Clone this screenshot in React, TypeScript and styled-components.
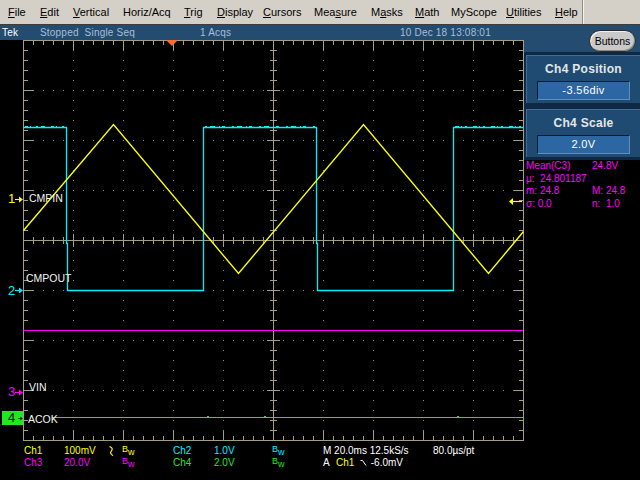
import React from "react";
import styled, { createGlobalStyle } from "styled-components";

const Global = createGlobalStyle`
  html, body { margin: 0; padding: 0; background: #000; }
  body { width: 640px; height: 480px; overflow: hidden; font-family: "Liberation Sans", Arial, sans-serif; }
`;

const Screen = styled.div`
  width: 640px;
  height: 480px;
  display: flex;
  flex-direction: column;
  background: #000;
  overflow: hidden;
`;

const MenuBar = styled.div`
  height: 24px;
  flex: none;
  display: flex;
  align-items: center;
  padding-left: 8px;
  background: #d4d0c8;
  border-bottom: 1px solid #3c3c3c;
  font-size: 11px;
  color: #000;
`;

const MenuItem = styled.div<{ $w: number }>`
  width: ${(p) => p.$w}px;
  flex: none;
  white-space: nowrap;
`;

const Acc = styled.span`
  text-decoration: underline;
  text-underline-offset: 1px;
`;

const MenuSep = styled.div`
  align-self: stretch;
  width: 1px;
  background: #8f8b84;
  border-right: 1px solid #f4f2ee;
`;

const Body = styled.div`
  flex: 1;
  display: flex;
  min-height: 0;
`;

const Main = styled.div`
  width: 524px;
  flex: none;
  display: flex;
  flex-direction: column;
`;

const StatusBar = styled.div`
  height: 15px;
  flex: none;
  display: flex;
  align-items: center;
  background: #244c70;
  font-size: 10px;
  color: #a9bfd6;
  white-space: nowrap;
`;

const StatusText = styled.span<{ $w: number; $bright?: boolean }>`
  width: ${(p) => p.$w}px;
  flex: none;
  color: ${(p) => (p.$bright ? "#ffffff" : "#a9bfd6")};
  letter-spacing: 0.2px;
`;

const ScopeArea = styled.div`
  position: relative;
  height: 401px;
  flex: none;
`;

const ScopeSvg = styled.svg`
  display: block;
`;

const MarkerNum = styled.span<{ $top: number; $color: string }>`
  position: absolute;
  left: 8px;
  top: ${(p) => p.$top}px;
  font-size: 13px;
  line-height: 14px;
  color: ${(p) => p.$color};
`;

const MarkerBox = styled.div<{ $top: number }>`
  position: absolute;
  left: 2px;
  top: ${(p) => p.$top}px;
  width: 21px;
  height: 14px;
  background: #1ee81e;
  display: flex;
  align-items: center;
  padding-left: 6px;
  box-sizing: border-box;
  gap: 3px;
  font-size: 13px;
  line-height: 14px;
  color: #000;
`;

const TraceLabel = styled.span<{ $top: number; $left: number }>`
  position: absolute;
  left: ${(p) => p.$left}px;
  top: ${(p) => p.$top}px;
  font-size: 10.5px;
  line-height: 12px;
  color: #f4f4f4;
`;

const Readout = styled.div`
  flex: 1;
  display: grid;
  grid-template-columns: 40px 44px 14px 51px 41px 58px 51px 110px auto;
  grid-auto-rows: 12px;
  align-content: start;
  padding: 4px 0 0 24px;
  font-size: 10px;
  line-height: 12px;
  white-space: nowrap;
`;

const Cell = styled.span<{ $c: string; $span?: number }>`
  color: ${(p) => p.$c};
  display: flex;
  align-items: center;
  ${(p) => (p.$span ? `grid-column: span ${p.$span};` : "")}
`;

const Inline = styled.span<{ $w?: number; $c: string }>`
  display: inline-block;
  ${(p) => (p.$w ? `width: ${p.$w}px;` : "")}
  color: ${(p) => p.$c};
`;

const BwMark = styled.span<{ $c: string }>`
  display: inline-flex;
  align-items: flex-start;
  height: 12px;
  color: ${(p) => p.$c};
  font-size: 9px;
  line-height: 9px;
`;

const BwB = styled.span`
  margin-top: 0px;
`;

const BwW = styled.span`
  margin-top: 3px;
`;

const Side = styled.div`
  flex: 1;
  display: flex;
  flex-direction: column;
`;

const SideHeader = styled.div`
  height: 27px;
  flex: none;
  background: #244c70;
  display: flex;
  justify-content: flex-end;
  align-items: flex-start;
  padding: 5px 4px 0 0;
  box-sizing: border-box;
`;

const PillButton = styled.div`
  width: 47px;
  height: 22px;
  box-sizing: border-box;
  border: 1px solid #2a2a2a;
  border-radius: 11px;
  background: #c9c9c9;
  box-shadow: inset 1px 1px 0 #f2f2f2, inset -1px -1px 0 #8a8a8a;
  color: #000;
  font-size: 10.5px;
  line-height: 20px;
  text-align: center;
`;

const PanelStack = styled.div`
  flex: none;
  display: flex;
  flex-direction: column;
  gap: 6px;
  padding: 3px 0 3px 2px;
  background: #0f2843;
`;

const Panel = styled.div`
  height: 48px;
  box-sizing: border-box;
  background: #1f4b72;
  border-top: 1px solid #3f6d95;
  border-left: 1px solid #3f6d95;
  display: flex;
  flex-direction: column;
  align-items: center;
`;

const PanelTitle = styled.div`
  margin-top: 6px;
  height: 14px;
  font-size: 12px;
  line-height: 14px;
  font-weight: bold;
  color: #e6e6e6;
  letter-spacing: 0.3px;
`;

const ValueBox = styled.div`
  margin-top: 5px;
  width: 93px;
  height: 19px;
  box-sizing: border-box;
  background: #2c67a4;
  border-top: 1px solid #0a1c30;
  border-left: 1px solid #0a1c30;
  border-bottom: 1px solid #5f8fbf;
  border-right: 1px solid #5f8fbf;
  color: #fff;
  font-size: 11px;
  line-height: 17px;
  text-align: center;
  letter-spacing: 0.4px;
`;

const Measurements = styled.div`
  display: grid;
  grid-template-columns: 66px auto;
  padding-left: 2px;
  font-size: 10px;
  line-height: 12.7px;
  color: #ff00ff;
  white-space: nowrap;
`;

const MeasWide = styled.span`
  grid-column: span 2;
`;

const GRAT = "#a39e84";
const DOT = "#8a8a8a";
const YEL = "#ffff00";
const CYA = "#00f0ff";
const MAG = "#ff00ff";
const GRN = "#22e622";

const divX = [73.5, 123.5, 173.5, 223.5, 323.5, 373.5, 423.5, 473.5];
const divY = [50.5, 100.5, 150.5, 250.5, 300.5, 350.5];

const ch1 = [
  [23, 190], [113, 84], [238, 233], [363, 84], [488, 233], [523, 191],
];
const ch2 = [
  [23, 87], [66, 87], [66, 203], [67, 203], [67, 250], [203, 250], [203, 87],
  [316, 87], [316, 203], [317, 203], [317, 250], [453, 250], [453, 87], [523, 87],
];
const pts = (a: number[][]) => a.map(([x, y]) => `${x + 0.5},${y + 0.5}`).join(" ");

const RightArrow = ({ y, color }: { y: number; color: string }) => (
  <g>
    <line x1={15} y1={y + 0.5} x2={21} y2={y + 0.5} stroke={color} strokeWidth={1} />
    <polygon points={`${19},${y - 2.5} ${23},${y + 0.5} ${19},${y + 3.5}`} fill={color} />
  </g>
);

function Graticule() {
  return (
    <ScopeSvg width={524} height={401} viewBox="0 0 524 401">
      <g stroke={DOT} strokeDasharray="1 9" shapeRendering="crispEdges">
        {divX.map((x) => (
          <line key={`vx${x}`} x1={x} y1={0} x2={x} y2={401} />
        ))}
        {divY.map((y) => (
          <line key={`hy${y}`} x1={23} y1={y} x2={524} y2={y} />
        ))}
      </g>
      <g stroke={GRAT} fill="none" shapeRendering="crispEdges">
        <rect x={23.5} y={0.5} width={500} height={400} />
        <line x1={23} y1={200.5} x2={524} y2={200.5} />
        <line x1={273.5} y1={0} x2={273.5} y2={401} />
        <line x1={23} y1={200.5} x2={524} y2={200.5} strokeWidth={7} strokeDasharray="1 9" />
        <line x1={23} y1={200.5} x2={524} y2={200.5} strokeWidth={13} strokeDasharray="1 49" />
        <line x1={273.5} y1={0} x2={273.5} y2={401} strokeWidth={7} strokeDasharray="1 9" />
        <line x1={273.5} y1={0} x2={273.5} y2={401} strokeWidth={13} strokeDasharray="1 49" />
        <line x1={23} y1={2.5} x2={524} y2={2.5} strokeWidth={5} strokeDasharray="1 9" />
        <line x1={23} y1={5} x2={524} y2={5} strokeWidth={10} strokeDasharray="1 49" />
        <line x1={23} y1={398.5} x2={524} y2={398.5} strokeWidth={5} strokeDasharray="1 9" />
        <line x1={23} y1={396} x2={524} y2={396} strokeWidth={10} strokeDasharray="1 49" />
        <line x1={25.5} y1={0} x2={25.5} y2={401} strokeWidth={5} strokeDasharray="1 9" />
        <line x1={28} y1={0} x2={28} y2={401} strokeWidth={10} strokeDasharray="1 49" />
        <line x1={521.5} y1={0} x2={521.5} y2={401} strokeWidth={5} strokeDasharray="1 9" />
        <line x1={519} y1={0} x2={519} y2={401} strokeWidth={10} strokeDasharray="1 49" />
      </g>
      <line x1={23} y1={290.5} x2={523} y2={290.5} stroke={MAG} strokeWidth={1.2} />
      <line x1={52} y1={377.5} x2={523} y2={377.5} stroke={GRN} strokeWidth={1.2} />
      <g fill={GRN}>
        <rect x={207} y={376} width={2} height={1} />
        <rect x={264} y={376} width={2} height={1} />
        <rect x={457} y={376} width={2} height={1} />
      </g>
      <polyline points={pts(ch2)} fill="none" stroke={CYA} strokeWidth={1.3} strokeLinejoin="miter" />
      <g stroke={CYA} strokeWidth={1} shapeRendering="crispEdges">
        <line x1={25} y1={86.5} x2={66} y2={86.5} strokeDasharray="3 2 1 5 2 3 4 6" />
        <line x1={205} y1={86.5} x2={316} y2={86.5} strokeDasharray="2 3 5 4 1 2 3 7" />
        <line x1={455} y1={86.5} x2={523} y2={86.5} strokeDasharray="4 2 1 3 2 6" />
      </g>
      <polyline points={pts(ch1)} fill="none" stroke={YEL} strokeWidth={1.4} strokeLinejoin="miter" />
      <polygon points="166,0 178,0 172,6" fill="#ff6f2a" />
      <RightArrow y={159} color={YEL} />
      <RightArrow y={250} color={CYA} />
      <RightArrow y={352} color={MAG} />
      <g>
        <line x1={512} y1={161.5} x2={522} y2={161.5} stroke={YEL} strokeWidth={1.2} />
        <polygon points="509,161.5 513,158 513,165" fill={YEL} />
      </g>
    </ScopeSvg>
  );
}

const SlopeIcon = () => (
  <svg width={8} height={8} viewBox="0 0 8 8">
    <path d="M0.5 1.5 H2.5 L6 6.5" fill="none" stroke="#ffffff" strokeWidth={1} />
  </svg>
);

const CouplingIcon = () => (
  <svg width={7} height={10} viewBox="0 0 7 10">
    <path d="M1.5 0.5 Q5.5 2 3.5 4.8 Q1.2 7.5 5 9.5" fill="none" stroke={YEL} strokeWidth={1.2} />
  </svg>
);

const Bw = ({ c }: { c: string }) => (
  <BwMark $c={c}>
    <BwB>B</BwB>
    <BwW>w</BwW>
  </BwMark>
);

export default function App() {
  return (
    <>
      <Global />
      <Screen>
        <MenuBar>
          <MenuItem $w={32}><Acc>F</Acc>ile</MenuItem>
          <MenuItem $w={33}><Acc>E</Acc>dit</MenuItem>
          <MenuItem $w={50}><Acc>V</Acc>ertical</MenuItem>
          <MenuItem $w={61}>Horiz/Acq</MenuItem>
          <MenuItem $w={33}><Acc>T</Acc>rig</MenuItem>
          <MenuItem $w={46}><Acc>D</Acc>isplay</MenuItem>
          <MenuItem $w={51}><Acc>C</Acc>ursors</MenuItem>
          <MenuItem $w={57}>Mea<Acc>s</Acc>ure</MenuItem>
          <MenuItem $w={44}>M<Acc>a</Acc>sks</MenuItem>
          <MenuItem $w={36}><Acc>M</Acc>ath</MenuItem>
          <MenuItem $w={55}>MyScope</MenuItem>
          <MenuItem $w={49}><Acc>U</Acc>tilities</MenuItem>
          <MenuItem $w={27}><Acc>H</Acc>elp</MenuItem>
          <MenuSep />
        </MenuBar>
        <Body>
          <Main>
            <StatusBar>
              <StatusText $w={2} />
              <StatusText $w={38} $bright>Tek</StatusText>
              <StatusText $w={160}>Stopped&nbsp; Single Seq</StatusText>
              <StatusText $w={200}>1 Acqs</StatusText>
              <StatusText $w={110}>10 Dec 18 13:08:01</StatusText>
            </StatusBar>
            <ScopeArea>
              <Graticule />
              <MarkerNum $top={152} $color={YEL}>1</MarkerNum>
              <MarkerNum $top={244} $color={CYA}>2</MarkerNum>
              <MarkerNum $top={345} $color={MAG}>3</MarkerNum>
              <MarkerBox $top={371}>
                <span>4</span>
                <svg width={8} height={7} viewBox="0 0 8 7">
                  <line x1={0} y1={3.5} x2={5} y2={3.5} stroke="#000" strokeWidth={1} />
                  <polygon points="4,0.5 8,3.5 4,6.5" fill="#000" />
                </svg>
              </MarkerBox>
              <TraceLabel $top={152} $left={29}>CMPIN</TraceLabel>
              <TraceLabel $top={232} $left={26}>CMPOUT</TraceLabel>
              <TraceLabel $top={341} $left={29}>VIN</TraceLabel>
              <TraceLabel $top={373} $left={28}>ACOK</TraceLabel>
            </ScopeArea>
            <Readout>
              <Cell $c={YEL}>Ch1</Cell>
              <Cell $c={YEL}>100mV</Cell>
              <Cell $c={YEL}><CouplingIcon /></Cell>
              <Cell $c={YEL}><Bw c={YEL} /></Cell>
              <Cell $c={CYA}>Ch2</Cell>
              <Cell $c={CYA}>1.0V</Cell>
              <Cell $c={CYA}><Bw c={CYA} /></Cell>
              <Cell $c="#ffffff">M 20.0ms 12.5kS/s</Cell>
              <Cell $c="#ffffff">80.0µs/pt</Cell>

              <Cell $c={MAG}>Ch3</Cell>
              <Cell $c={MAG}>20.0V</Cell>
              <Cell $c={MAG} />
              <Cell $c={MAG}><Bw c={MAG} /></Cell>
              <Cell $c={GRN}>Ch4</Cell>
              <Cell $c={GRN}>2.0V</Cell>
              <Cell $c={GRN}><Bw c={GRN} /></Cell>
              <Cell $c="#ffffff" $span={2}>
                <Inline $w={13} $c="#ffffff">A</Inline>
                <Inline $w={24} $c={YEL}>Ch1</Inline>
                <SlopeIcon />
                <Inline $c="#ffffff">&nbsp;-6.0mV</Inline>
              </Cell>
            </Readout>
          </Main>
          <Side>
            <SideHeader>
              <PillButton>Buttons</PillButton>
            </SideHeader>
            <PanelStack>
              <Panel>
                <PanelTitle>Ch4 Position</PanelTitle>
                <ValueBox>-3.56div</ValueBox>
              </Panel>
              <Panel>
                <PanelTitle>Ch4 Scale</PanelTitle>
                <ValueBox>2.0V</ValueBox>
              </Panel>
            </PanelStack>
            <Measurements>
              <span>Mean(C3)</span>
              <span>24.8V</span>
              <MeasWide>µ:&nbsp; 24.801187</MeasWide>
              <span>m: 24.8</span>
              <span>M: 24.8</span>
              <span>σ: 0.0</span>
              <span>n:&nbsp; 1.0</span>
            </Measurements>
          </Side>
        </Body>
      </Screen>
    </>
  );
}
